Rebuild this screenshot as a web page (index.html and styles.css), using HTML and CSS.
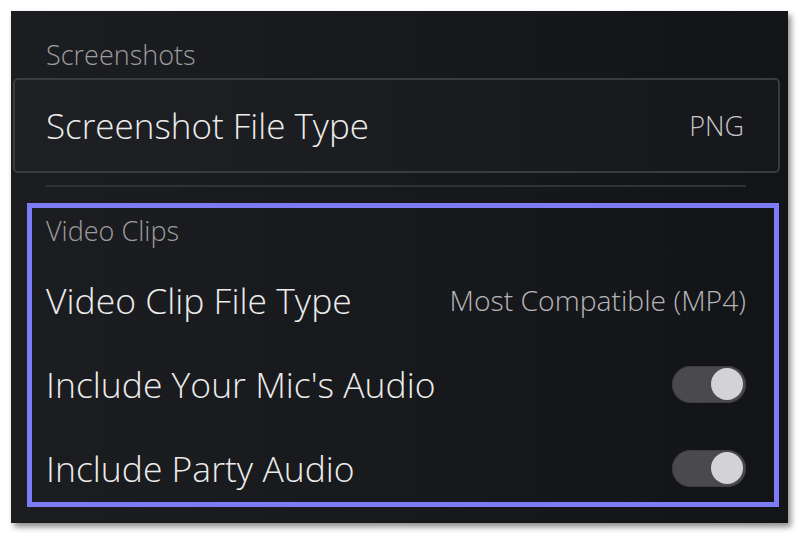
FILE: index.html
```html
<!DOCTYPE html>
<html lang="en">
<head>
<meta charset="utf-8">
<title>Captures Settings</title>
<link rel="stylesheet" href="styles.css">
</head>
<body>
<div class="panel">
  <div class="section-head first">Screenshots</div>
  <div class="focus-row">
    <span class="label big">Screenshot File Type</span>
    <span class="value big-value">PNG</span>
  </div>
  <div class="divider"></div>
  <div class="highlight">
    <div class="section-head">Video Clips</div>
    <div class="rows">
      <div class="row">
        <span class="label">Video Clip File Type</span>
        <span class="value">Most Compatible (MP4)</span>
      </div>
      <div class="row">
        <span class="label">Include Your Mic's Audio</span>
        <span class="toggle"><span class="knob"></span></span>
      </div>
      <div class="row">
        <span class="label">Include Party Audio</span>
        <span class="toggle"><span class="knob"></span></span>
      </div>
    </div>
  </div>
</div>
</body>
</html>
```

FILE: styles.css
```css
* { box-sizing: border-box; }

html, body {
  margin: 0;
  padding: 0;
  background: #ffffff;
}

body {
  width: 800px;
  height: 537px;
  overflow: hidden;
  font-family: "Open Sans", "Noto Sans", sans-serif;
  font-weight: 300;
  padding: 11px 12px 14px 11px;
}

.panel {
  width: 777px;
  height: 512px;
  background: linear-gradient(90deg, #1c1d21 0%, #18191d 50%, #131418 100%);
  box-shadow: 3px 4px 6px rgba(0, 0, 0, 0.45);
  display: flex;
  flex-direction: column;
}

.section-head {
  font-size: 27px;
  line-height: 30px;
  color: #9c9c9e;
  padding-left: 35px;
  white-space: nowrap;
}

.section-head.first {
  height: 67px;
  display: flex;
  align-items: flex-end;
  padding-bottom: 8px;
}

.focus-row {
  margin: 0 8px 0 2px;
  height: 95px;
  border: 2px solid #3a3b40;
  border-radius: 5px;
  background: rgba(255, 255, 255, 0.015);
  display: flex;
  align-items: center;
  justify-content: space-between;
  padding: 0 34px 0 31px;
}

.label {
  font-size: 35.5px;
  line-height: 44px;
  color: #ececec;
  white-space: nowrap;
}

.label.big {
  font-size: 35px;
}

.value {
  font-size: 28.3px;
  line-height: 44px;
  color: #b6b6b8;
  white-space: nowrap;
}

.value.big-value {
  font-size: 27px;
  color: #c6c6c8;
}

.divider {
  margin: 12px 42px 0 35px;
  height: 2px;
  background: #313237;
}

.highlight {
  margin: 16px 9px 0 16px;
  height: 304px;
  border: 5px solid #7d7cf6;
  display: flex;
  flex-direction: column;
}

.highlight .section-head {
  padding-left: 14px;
  height: 70px;
  padding-top: 8px;
}

.rows {
  display: flex;
  flex-direction: column;
  gap: 40px;
  padding: 0 28px 0 14px;
}

.row {
  height: 44px;
  display: flex;
  align-items: center;
  justify-content: space-between;
}

.toggle {
  width: 74px;
  height: 37px;
  border-radius: 19px;
  background: #4a4a4e;
  box-shadow: inset 0 0 0 1px #3e3e42;
  display: flex;
  align-items: center;
  justify-content: flex-end;
  padding-right: 3px;
}

.knob {
  width: 32px;
  height: 32px;
  border-radius: 50%;
  background: #d3d3d5;
}
```
